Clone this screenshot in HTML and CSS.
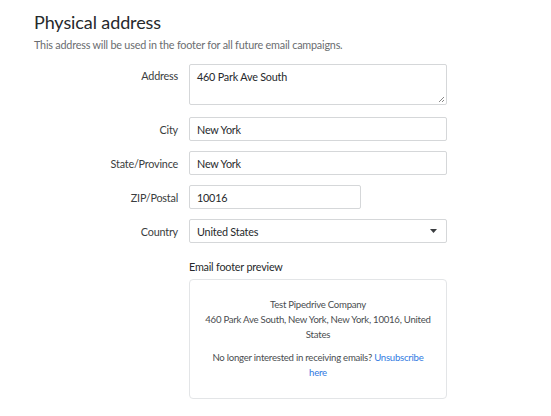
FILE: index.html
```html
<!DOCTYPE html>
<html>
<head>
<meta charset="utf-8">
<link rel="stylesheet" href="styles.css">
</head>
<body>
<div class="page">
  <header class="head">
    <h1 class="title">Physical address</h1>
    <p class="subtitle">This address will be used in the footer for all future email campaigns.</p>
  </header>
  <div class="form">
    <label class="label">Address</label>
    <div class="field textarea">460 Park Ave South<svg class="grip" width="7" height="7" viewBox="0 0 7 7"><path d="M6 1L1 6M6 4L4 6" stroke="#888" stroke-width="1"/></svg></div>

    <label class="label center">City</label>
    <div class="field">New York</div>

    <label class="label center">State/Province</label>
    <div class="field">New York</div>

    <label class="label center">ZIP/Postal</label>
    <div class="field short">10016</div>

    <label class="label center">Country</label>
    <div class="field select">United States<svg class="caret" width="7" height="4" viewBox="0 0 7 4"><path d="M0 0H7L3.5 4Z" fill="#3a3d40"/></svg></div>

    <div></div>
    <div class="preview-wrap">
      <div class="preview-title">Email footer preview</div>
      <div class="preview">
        <p class="pline">Test Pipedrive Company<br>460 Park Ave South, New York, New York, 10016, United States</p>
        <p class="pline unsub">No longer interested in receiving emails? <a class="link"><span>Unsubscribe</span> <span>here</span></a></p>
      </div>
    </div>
  </div>
</div>
</body>
</html>
```
FILE: styles.css
```css
* { box-sizing: border-box; }
html, body { margin: 0; padding: 0; background: #fff; }
body {
  font-family: "Lato", "Open Sans", sans-serif;
  color: #26292c;
  width: 551px;
  height: 416px;
  overflow: hidden;
}
.page { padding-top: 10px; }
.head { padding-left: 34px; }
.title {
  margin: 0;
  font-size: 18px;
  font-weight: 400;
  line-height: 24px;
  color: #26292c;
  letter-spacing: -0.1px;
}
.subtitle {
  margin: 4px 0 0;
  font-size: 10.8px;
  letter-spacing: -0.2px;
  line-height: 14px;
  color: #6a6d70;
}
.form {
  display: grid;
  grid-template-columns: 178px 258px;
  column-gap: 11px;
  row-gap: 10px;
  margin-top: 12px;
  font-size: 10.8px;
  letter-spacing: -0.2px;
}
.label {
  text-align: right;
  color: #3a3d40;
  padding-top: 5px;
}
.label.center { align-self: center; padding-top: 0; }
.field {
  position: relative;
  height: 24px;
  border: 1px solid #d5d7d9;
  border-radius: 2px;
  padding: 0 7px;
  display: flex;
  align-items: center;
  color: #26292c;
}
.field.textarea {
  height: 41px;
  align-items: flex-start;
  padding-top: 5px;
  margin-bottom: 2px;
}
.grip { position: absolute; right: 1px; bottom: 1px; }
.field.short { width: 172px; }
.field.select { justify-content: space-between; padding-right: 9px; }
.caret { display: block; }
.preview-wrap { margin-top: 7px; }
.preview-title { font-size: 10.8px; color: #26292c; line-height: 14px; }
.preview {
  margin-top: 5px;
  border: 1px solid #e3e5e7;
  border-radius: 4px;
  padding: 17px 13px 18px;
  text-align: center;
  font-size: 9.6px;
  letter-spacing: -0.25px;
  line-height: 15px;
  color: #4a4d50;
}
.pline { margin: 0; }
.pline + .pline { margin-top: 8px; }
.pline.unsub { padding: 0 2px; }
.link { color: #317ae2; text-decoration: none; }
```
